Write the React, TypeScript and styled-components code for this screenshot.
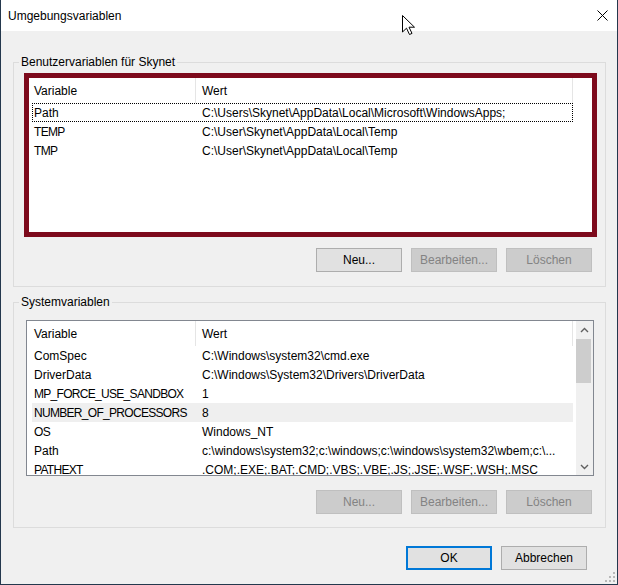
import React from 'react';
import styled, { createGlobalStyle } from 'styled-components';

const GlobalStyle = createGlobalStyle`
  html, body {
    margin: 0;
    padding: 0;
    background: #f0f0f0;
  }
  body {
    font-family: 'Liberation Sans', Arial, sans-serif;
    font-size: 12px;
    color: #000;
  }
`;

const Window = styled.div`
  position: relative;
  width: 618px;
  height: 585px;
  box-sizing: border-box;
  border: 1px solid #24384d;
  border-top: none;
  background: #f0f0f0;
  display: flex;
  flex-direction: column;
  overflow: hidden;
`;

const TitleBar = styled.div`
  height: 31px;
  flex: none;
  background: #fff;
  display: flex;
  align-items: center;
  padding-left: 7px;
`;

const Title = styled.span`
  line-height: 14px;
`;

const CloseButton = styled.div`
  margin-left: auto;
  width: 30px;
  height: 31px;
  display: flex;
  align-items: center;
  justify-content: center;
`;

const Body = styled.div`
  flex: 1;
  display: flex;
  flex-direction: column;
  padding: 0 11px 0 12px;
`;

const Group = styled.fieldset<{ $top: number; $padTop: number; $padBottom: number }>`
  margin: ${p => p.$top}px 0 0 0;
  padding: ${p => p.$padTop}px 8px ${p => p.$padBottom}px 10px;
  border: 1px solid #dcdcdc;
  min-inline-size: 0;
  display: flex;
  flex-direction: column;
`;

const GroupLabel = styled.legend`
  margin-left: -5px;
  padding: 0 2px;
  line-height: 14px;
`;

const ListFrame = styled.div<{ $accent?: boolean; $height: number }>`
  height: ${p => p.$height}px;
  box-sizing: border-box;
  margin: ${p => (p.$accent ? '0' : '0 3px 0 2px')};
  border: ${p => (p.$accent ? '5px solid #7d0a1c' : '1px solid #828790')};
  background: #fff;
  display: flex;
  overflow: hidden;
`;

const ListBody = styled.div<{ $inset: number }>`
  flex: 1;
  min-width: 0;
  padding-left: ${p => p.$inset}px;
  overflow: hidden;
`;

const HeaderRow = styled.div`
  display: grid;
  grid-template-columns: 164px 377px;
  width: 541px;
  height: 25px;
`;

const HeaderCell = styled.div<{ $pad: number }>`
  height: 25px;
  box-sizing: border-box;
  padding: 1px 0 0 ${p => p.$pad}px;
  line-height: 24px;
  border-right: 1px solid #e5e5e5;
`;

const Row = styled.div<{ $focused?: boolean; $selected?: boolean }>`
  display: grid;
  grid-template-columns: 164px 377px;
  width: 541px;
  height: 19px;
  box-sizing: border-box;
  padding-top: 1px;
  line-height: 18px;
  white-space: nowrap;
  background: ${p => (p.$selected ? '#efefef' : 'transparent')};
  outline: ${p => (p.$focused ? '1px dotted #000' : 'none')};
  outline-offset: -1px;
`;

const Cell = styled.div<{ $pad: number; $caps?: boolean }>`
  padding-left: ${p => p.$pad}px;
  overflow: hidden;
  letter-spacing: ${p => (p.$caps ? '-0.7px' : 'normal')};
`;

const ScrollBar = styled.div`
  width: 17px;
  flex: none;
  background: #f0f0f0;
  display: flex;
  flex-direction: column;
`;

const ScrollArrow = styled.div`
  height: 17px;
  flex: none;
  display: flex;
  align-items: center;
  justify-content: center;
`;

const ScrollTrack = styled.div`
  flex: 1;
`;

const ScrollThumb = styled.div`
  width: 15px;
  height: 44px;
  margin-top: 1px;
  background: #cdcdcd;
`;

const ButtonRow = styled.div<{ $top: number }>`
  display: flex;
  justify-content: flex-end;
  gap: 9px;
  margin-top: ${p => p.$top}px;
  padding-right: 5px;
`;

const Footer = styled.div`
  display: flex;
  justify-content: flex-end;
  gap: 9px;
  margin-top: 18px;
  padding-right: 19px;
`;

const Button = styled.button<{ $primary?: boolean }>`
  width: 86px;
  height: 24px;
  box-sizing: border-box;
  padding: 0;
  font: inherit;
  font-size: 12px;
  color: #000;
  background: #e1e1e1;
  border: ${p => (p.$primary ? '2px solid #0078d7' : '1px solid #adadad')};
  border-radius: 0;

  &:disabled {
    color: #838383;
    background: #cccccc;
    border-color: #bfbfbf;
  }
`;

const Cursor = styled.svg`
  position: absolute;
  left: 400px;
  top: 14px;
`;

const Grip = styled.svg`
  position: absolute;
  right: 2px;
  bottom: 2px;
`;

type EnvVar = { name: string; value: string; focused?: boolean; selected?: boolean };

const userVars: EnvVar[] = [
  { name: 'Path', value: 'C:\\Users\\Skynet\\AppData\\Local\\Microsoft\\WindowsApps;', focused: true },
  { name: 'TEMP', value: 'C:\\User\\Skynet\\AppData\\Local\\Temp' },
  { name: 'TMP', value: 'C:\\User\\Skynet\\AppData\\Local\\Temp' },
];

const systemVars: EnvVar[] = [
  { name: 'ComSpec', value: 'C:\\Windows\\system32\\cmd.exe' },
  { name: 'DriverData', value: 'C:\\Windows\\System32\\Drivers\\DriverData' },
  { name: 'MP_FORCE_USE_SANDBOX', value: '1' },
  { name: 'NUMBER_OF_PROCESSORS', value: '8', selected: true },
  { name: 'OS', value: 'Windows_NT' },
  { name: 'Path', value: 'c:\\windows\\system32;c:\\windows;c:\\windows\\system32\\wbem;c:\\...' },
  { name: 'PATHEXT', value: '.COM;.EXE;.BAT;.CMD;.VBS;.VBE;.JS;.JSE;.WSF;.WSH;.MSC' },
];

const isCaps = (s: string) => s === s.toUpperCase();

const Chevron: React.FC<{ up?: boolean }> = ({ up }) => (
  <svg width="9" height="6" viewBox="0 0 9 6">
    <path
      d={up ? 'M1 5 L4.5 1.5 L8 5' : 'M1 1 L4.5 4.5 L8 1'}
      fill="none"
      stroke="#606060"
      strokeWidth="1.4"
    />
  </svg>
);

const VariableList: React.FC<{ vars: EnvVar[]; accent?: boolean; height: number; scroll?: boolean }> = ({
  vars,
  accent,
  height,
  scroll,
}) => (
  <ListFrame $accent={accent} $height={height}>
    <ListBody $inset={accent ? 3 : 5}>
      <HeaderRow>
        <HeaderCell $pad={2}>Variable</HeaderCell>
        <HeaderCell $pad={6}>Wert</HeaderCell>
      </HeaderRow>
      {vars.map(v => (
        <Row key={v.name} $focused={v.focused} $selected={v.selected}>
          <Cell $pad={2} $caps={isCaps(v.name)}>
            {v.name}
          </Cell>
          <Cell $pad={6}>{v.value}</Cell>
        </Row>
      ))}
    </ListBody>
    {scroll && (
      <ScrollBar>
        <ScrollArrow>
          <Chevron up />
        </ScrollArrow>
        <ScrollTrack>
          <ScrollThumb />
        </ScrollTrack>
        <ScrollArrow>
          <Chevron />
        </ScrollArrow>
      </ScrollBar>
    )}
  </ListFrame>
);

const App: React.FC = () => (
  <>
    <GlobalStyle />
    <Window>
      <TitleBar>
        <Title>Umgebungsvariablen</Title>
        <CloseButton>
          <svg width="11" height="11" viewBox="0 0 11 11">
            <path d="M0.5 0.5 L10.5 10.5 M10.5 0.5 L0.5 10.5" stroke="#000" strokeWidth="1" />
          </svg>
        </CloseButton>
      </TitleBar>
      <Body>
        <Group $top={24} $padTop={4} $padBottom={14}>
          <GroupLabel>Benutzervariablen für Skynet</GroupLabel>
          <VariableList vars={userVars} accent height={164} />
          <ButtonRow $top={11}>
            <Button>Neu...</Button>
            <Button disabled>Bearbeiten...</Button>
            <Button disabled>Löschen</Button>
          </ButtonRow>
        </Group>
        <Group $top={8} $padTop={11} $padBottom={13}>
          <GroupLabel>Systemvariablen</GroupLabel>
          <VariableList vars={systemVars} height={156} scroll />
          <ButtonRow $top={14}>
            <Button disabled>Neu...</Button>
            <Button disabled>Bearbeiten...</Button>
            <Button disabled>Löschen</Button>
          </ButtonRow>
        </Group>
        <Footer>
          <Button $primary>OK</Button>
          <Button>Abbrechen</Button>
        </Footer>
      </Body>
      <Cursor width="15" height="22" viewBox="0 0 15 22">
        <path
          d="M1.5 1.5 L1.5 18 L5.5 14.2 L8.5 20.5 L11 19.4 L8 13.2 L13.5 13.2 Z"
          fill="#fff"
          stroke="#000"
          strokeWidth="1"
          strokeLinejoin="miter"
        />
      </Cursor>
      <Grip width="10" height="10" viewBox="0 0 10 10">
        <g fill="#b8b8b8">
          <rect x="8" y="0" width="2" height="2" />
          <rect x="4" y="4" width="2" height="2" />
          <rect x="8" y="4" width="2" height="2" />
          <rect x="0" y="8" width="2" height="2" />
          <rect x="4" y="8" width="2" height="2" />
          <rect x="8" y="8" width="2" height="2" />
        </g>
      </Grip>
    </Window>
  </>
);

export default App;
